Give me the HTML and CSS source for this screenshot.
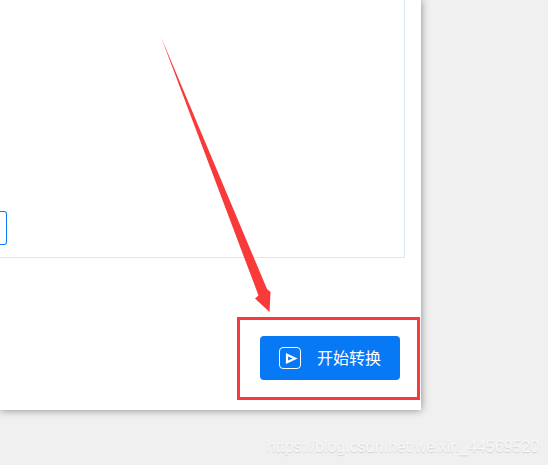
FILE: index.html
```html
<!DOCTYPE html>
<html lang="en">
<head>
    <meta charset="UTF-8">
    <meta name="viewport" content="width=device-width, initial-scale=1.0">
    <title>开始转换</title>
    <link rel="stylesheet" href="styles.css">
</head>
<body>

<div class="window">
    <div class="panel">
        <div class="small-btn"></div>
    </div>
    <div class="footer">
        <button class="start-btn">
            <svg class="play-icon" width="22" height="22" viewBox="0 0 22 22">
                <rect x="0.5" y="0.5" width="21" height="21" rx="3.5" fill="none" stroke="#fff"/>
                <path d="M8 7.8 L16 11.5 L8 15.2 Z" fill="none" stroke="#fff" stroke-width="2.2"/>
            </svg>
            <span class="start-label">开始转换</span>
        </button>
    </div>
</div>

<!-- annotations drawn over the screenshot -->
<div class="highlight"></div>
<svg class="arrow" width="548" height="465" viewBox="0 0 548 465">
    <path d="M161 37 L267 289 L270.5 292 L269.5 312 L255 298.5 L258.5 295.5 Z" fill="#f93a3a"/>
</svg>
<div class="watermark">https://blog.csdn.net/weixin_44569520</div>

</body>
</html>
```

FILE: styles.css
```css
html, body {
    margin: 0;
    height: 100%;
}
body {
    background: #f0f0f0;
    font-family: "Liberation Sans", "Noto Sans CJK SC", sans-serif;
    overflow: hidden;
}
.window {
    width: 421px;
    height: 410px;
    background: white;
    box-shadow: 0px 0px 8px rgba(0, 0, 0, 0.45);
    display: flex;
    flex-direction: column;
}
.panel {
    width: 404px;
    height: 257px;
    border-right: 1px solid #d6e6f2;
    border-bottom: 1px solid #dfe6ec;
    display: flex;
    align-items: flex-end;
}
.small-btn {
    width: 6px;
    height: 32px;
    margin-bottom: 12px;
    border: 1px solid #0a7df5;
    border-left: none;
    border-radius: 0 3px 3px 0;
}
.footer {
    display: flex;
    justify-content: flex-end;
    padding: 78px 21px 0 0;
}
.start-btn {
    width: 140px;
    height: 44px;
    padding: 0 19px;
    border: none;
    border-radius: 4px;
    background: #0779f5;
    color: white;
    font-family: "Noto Sans CJK SC", sans-serif;
    font-size: 16px;
    display: flex;
    align-items: center;
    gap: 16px;
}
.start-label {
    padding-bottom: 2px;
}
.play-icon {
    flex-shrink: 0;
}
.highlight {
    position: absolute;
    left: 237px;
    top: 317px;
    width: 177px;
    height: 77px;
    border: 3px solid #f93a3a;
}
.arrow {
    position: absolute;
    left: 0;
    top: 0;
}
.watermark {
    position: absolute;
    left: 267px;
    top: 438px;
    font-size: 16px;
    color: #f8f8f8;
    text-shadow: 0px 1px 1px #d0d0d0;
    white-space: nowrap;
}
```
